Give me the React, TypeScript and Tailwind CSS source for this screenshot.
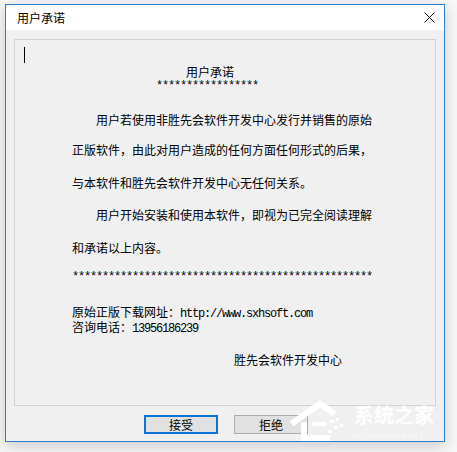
import React from "react";

const cjk = "font-['Noto_Sans_CJK_SC',sans-serif]";
const mono = "font-['Liberation_Mono',monospace] tracking-[-1.2px]";

function Line({ className = "", children }: { className?: string; children: React.ReactNode }) {
  return (
    <div className={`h-[15px] leading-[15px] whitespace-nowrap text-[12px] text-black ${className}`}>
      {children}
    </div>
  );
}

function Watermark() {
  return (
    <div className="absolute left-[290px] top-[398px] w-[160px] h-[46px] pointer-events-none">
      <svg width="62" height="44" viewBox="0 0 62 44" className="absolute left-0 top-0">
        <path d="M4 24 L30 6 L42 14" stroke="white" strokeWidth="6" fill="none" strokeLinecap="square" />
        <path d="M14 24 L14 40 L40 40" stroke="white" strokeWidth="6" fill="none" />
        <rect x="22" y="24" width="14" height="4" fill="white" />
        <rect x="40" y="22" width="4" height="3" fill="white" />
        <rect x="46" y="20" width="3" height="3" fill="white" />
        <rect x="44" y="28" width="4" height="3" fill="white" />
        <rect x="50" y="26" width="3" height="3" fill="white" />
        <rect x="38" y="32" width="4" height="3" fill="white" />
      </svg>
      <div className={`absolute left-[64px] top-[6px] text-[20px] leading-[22px] font-bold text-white/90 ${cjk}`}>
        系统之家
      </div>
      <div className="absolute left-[62px] top-[34px] text-[7px] leading-[8px] tracking-[0.5px] text-white/70 font-['Liberation_Sans',sans-serif]">
        XITONGZHIJIA.NET
      </div>
    </div>
  );
}

export default function App() {
  return (
    <div className="relative w-[457px] h-[452px] bg-[#f7f7f7] pl-[5px] pt-[4px] overflow-hidden">
      <div className="w-[440px] h-[438px] border border-[#2a7fd0] bg-[#f0f0f0] flex flex-col shadow-[0_4px_14px_rgba(0,0,0,0.18)]">
        {/* title bar */}
        <div className="h-[25px] bg-white flex items-center justify-between pl-[11px] pr-[9px]">
          <span className={`text-[12px] text-black ${cjk}`}>用户承诺</span>
          <svg width="11" height="11" viewBox="0 0 11 11">
            <path d="M0.5 0.5 L10.5 10.5 M10.5 0.5 L0.5 10.5" stroke="#111" strokeWidth="1" />
          </svg>
        </div>

        {/* text box */}
        <div className="mt-[9px] ml-[8px] w-[422px] h-[367px] border border-[#d4d4d4] bg-[#f0f0f0] relative">
          <div className="absolute left-[9px] top-[7px] w-px h-[16px] bg-black" />
          <div className={`flex flex-col pl-[57px] ${cjk}`}>
            <Line className="mt-[24px] pl-[114px]">用户承诺</Line>
            <Line className={`pl-[84px] ${mono}`}>*****************</Line>
            <Line className="mt-[18px] pl-[24px]">用户若使用非胜先会软件开发中心发行并销售的原始</Line>
            <Line className="mt-[15px]">正版软件，由此对用户造成的任何方面任何形式的后果，</Line>
            <Line className="mt-[18px]">与本软件和胜先会软件开发中心无任何关系。</Line>
            <Line className="mt-[17px] pl-[24px]">用户开始安装和使用本软件，即视为已完全阅读理解</Line>
            <Line className="mt-[18px]">和承诺以上内容。</Line>
            <Line className={`mt-[15px] ${mono}`}>**************************************************</Line>
            <Line className="mt-[19px]">
              原始正版下载网址：<span className={mono}>http://www.sxhsoft.com</span>
            </Line>
            <Line>
              咨询电话：<span className={mono}>13956186239</span>
            </Line>
            <Line className="mt-[18px] pl-[162px]">胜先会软件开发中心</Line>
          </div>
        </div>

        {/* buttons */}
        <div className="mt-[9px] flex justify-center gap-[16px] pl-[2px]">
          <button className={`w-[74px] h-[19px] border-2 border-[#0a74d6] bg-[#e1e1e1] text-[12px] leading-[15px] text-black ${cjk}`}>
            接受
          </button>
          <button className={`w-[74px] h-[19px] border border-[#adadad] bg-[#e1e1e1] text-[12px] leading-[17px] text-black ${cjk}`}>
            拒绝
          </button>
        </div>
      </div>
      <Watermark />
    </div>
  );
}
